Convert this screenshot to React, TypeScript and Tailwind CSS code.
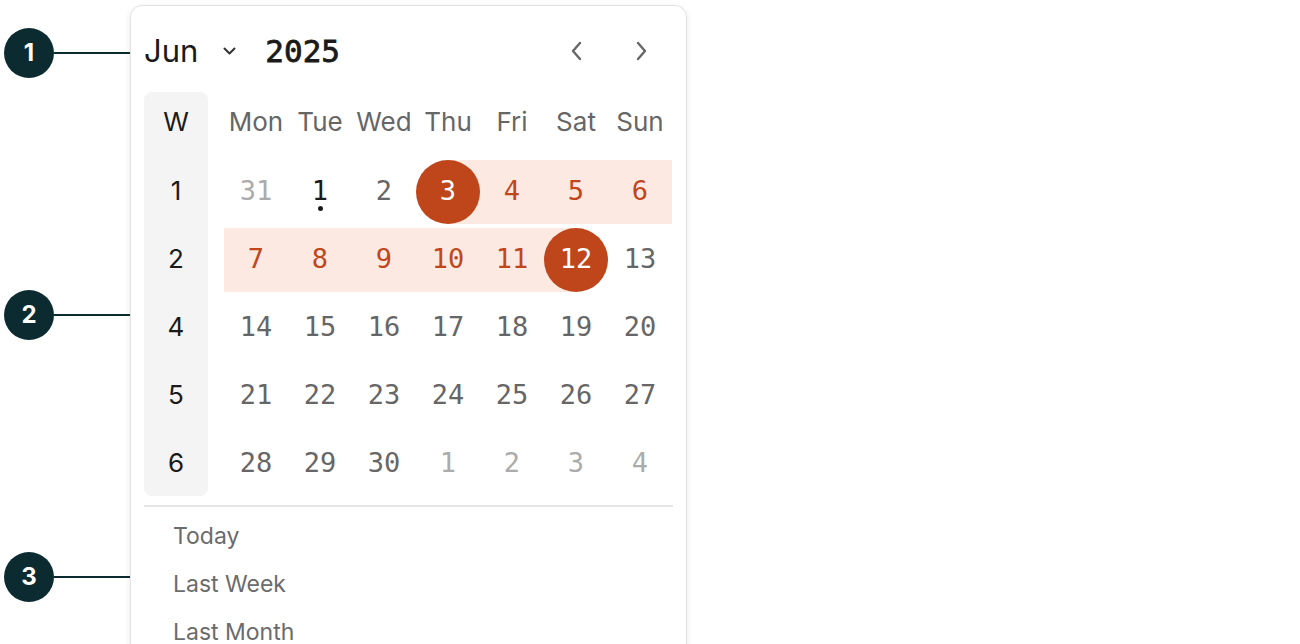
import React from "react";

const SANS = { fontFamily: "Inter, 'Noto Sans', sans-serif" };
const MONO = { fontFamily: "'DejaVu Sans Mono', 'Liberation Mono', monospace" };

type Day = { n: number; kind: "muted" | "normal" | "today" | "range" | "start" | "end" };

const rows: { week: number; days: Day[] }[] = [
  {
    week: 1,
    days: [
      { n: 31, kind: "muted" },
      { n: 1, kind: "today" },
      { n: 2, kind: "normal" },
      { n: 3, kind: "start" },
      { n: 4, kind: "range" },
      { n: 5, kind: "range" },
      { n: 6, kind: "range" },
    ],
  },
  {
    week: 2,
    days: [
      { n: 7, kind: "range" },
      { n: 8, kind: "range" },
      { n: 9, kind: "range" },
      { n: 10, kind: "range" },
      { n: 11, kind: "range" },
      { n: 12, kind: "end" },
      { n: 13, kind: "normal" },
    ],
  },
  {
    week: 4,
    days: [14, 15, 16, 17, 18, 19, 20].map((n) => ({ n, kind: "normal" as const })),
  },
  {
    week: 5,
    days: [21, 22, 23, 24, 25, 26, 27].map((n) => ({ n, kind: "normal" as const })),
  },
  {
    week: 6,
    days: [
      { n: 28, kind: "normal" },
      { n: 29, kind: "normal" },
      { n: 30, kind: "normal" },
      { n: 1, kind: "muted" },
      { n: 2, kind: "muted" },
      { n: 3, kind: "muted" },
      { n: 4, kind: "muted" },
    ],
  },
];

function DayCell({ d }: { d: Day }) {
  if (d.kind === "start" || d.kind === "end") {
    return (
      <div className="relative flex h-[64px] w-[64px] items-center justify-center">
        <div
          className={
            d.kind === "start"
              ? "absolute right-0 top-0 h-[64px] w-[32px] bg-[#fce9e2]"
              : "absolute left-0 top-0 h-[64px] w-[32px] bg-[#fce9e2]"
          }
        />
        <div
          className="relative flex h-[64px] w-[64px] items-center justify-center rounded-full bg-[#bf461b] pb-[2px] text-[27px] text-white"
          style={MONO}
        >
          {d.n}
        </div>
      </div>
    );
  }
  const color =
    d.kind === "muted"
      ? "text-[#ababab]"
      : d.kind === "range"
      ? "text-[#c0461b]"
      : d.kind === "today"
      ? "text-[#1a1a1a]"
      : "text-[#666666]";
  return (
    <div
      className={
        "relative flex h-[64px] w-[64px] items-center justify-center pb-[2px] text-[27px] " +
        color +
        (d.kind === "range" ? " bg-[#fce9e2]" : "")
      }
      style={MONO}
    >
      {d.n}
      {d.kind === "today" && (
        <span className="absolute left-[30px] top-[46px] h-[5px] w-[5px] rounded-full bg-[#1a1a1a]" />
      )}
    </div>
  );
}

function Marker({ n }: { n: number }) {
  return (
    <div className="flex h-[50px] items-center">
      <div
        className="flex h-[50px] w-[50px] items-center justify-center rounded-full bg-[#0c2b31] text-[24px] font-bold text-white"
        style={SANS}
      >
        {n}
      </div>
      <div className="h-[2px] flex-1 bg-[#0c2b31]" />
    </div>
  );
}

export default function App() {
  const weekdays = ["Mon", "Tue", "Wed", "Thu", "Fri", "Sat", "Sun"];
  return (
    <div className="flex h-[644px] w-[1300px] overflow-hidden bg-white" style={SANS}>
      <div className="flex w-[130px] flex-col gap-[212px] pl-[4px] pt-[28px]">
        <Marker n={1} />
        <Marker n={2} />
        <Marker n={3} />
      </div>
      <div className="mt-[5px] h-[700px] w-[557px] rounded-[12px] border border-[#e3e3e3] bg-white px-[13px] pt-[13px] shadow-[0_2px_6px_rgba(0,0,0,0.09)]">
        {/* header */}
        <div className="flex h-[64px] items-center">
          <div className="flex items-center">
            <span className="text-[31px] text-[#1a1a1a]" style={SANS}>
              Jun
            </span>
            <svg className="ml-[25px]" width="13" height="8" viewBox="0 0 13 8" fill="none">
              <path d="M1.5 1.5 L6.5 6.5 L11.5 1.5" stroke="#333" strokeWidth="2" strokeLinecap="round" strokeLinejoin="round" />
            </svg>
            <span
              className="ml-[29px] text-[31px] font-normal text-[#1a1a1a] [-webkit-text-stroke:0.8px_#1a1a1a]"
              style={MONO}
            >
              2025
            </span>
          </div>
          <div className="ml-auto flex">
            <div className="flex h-[64px] w-[64px] items-center justify-center">
              <svg width="12" height="20" viewBox="0 0 12 20" fill="none">
                <path d="M9 2 L2 10 L9 18" stroke="#666" strokeWidth="2.4" strokeLinecap="round" strokeLinejoin="round" />
              </svg>
            </div>
            <div className="flex h-[64px] w-[64px] items-center justify-center">
              <svg width="12" height="20" viewBox="0 0 12 20" fill="none">
                <path d="M3 2 L10 10 L3 18" stroke="#666" strokeWidth="2.4" strokeLinecap="round" strokeLinejoin="round" />
              </svg>
            </div>
          </div>
        </div>

        {/* grid */}
        <div className="mt-[9px] flex gap-[16px]">
          <div className="flex w-[64px] flex-col gap-[4px] rounded-[8px] bg-[#f4f4f4]">
            <div className="flex h-[64px] items-center justify-center pb-[5px] text-[26px] text-[#1a1a1a]">W</div>
            {rows.map((r) => (
              <div key={r.week} className="flex h-[64px] items-center justify-center pb-[4px] text-[26px] text-[#1a1a1a]">
                {r.week}
              </div>
            ))}
          </div>
          <div className="flex flex-col gap-[4px]">
            <div className="grid h-[64px] grid-cols-7">
              {weekdays.map((w) => (
                <div key={w} className="flex items-center justify-center pb-[5px] text-[26px] text-[#666666]">
                  {w}
                </div>
              ))}
            </div>
            {rows.map((r) => (
              <div key={r.week} className="grid grid-cols-7">
                {r.days.map((d, i) => (
                  <DayCell key={i} d={d} />
                ))}
              </div>
            ))}
          </div>
        </div>

        <div className="mt-[9px] h-[2px] bg-[#e6e6e6]" />

        <div className="mt-[5px] flex flex-col">
          {["Today", "Last Week", "Last Month"].map((t) => (
            <div key={t} className="flex h-[48px] items-center pl-[29px] text-[23px] leading-[24px] text-[#6b6b6b]">
              {t}
            </div>
          ))}
        </div>
      </div>
    </div>
  );
}
